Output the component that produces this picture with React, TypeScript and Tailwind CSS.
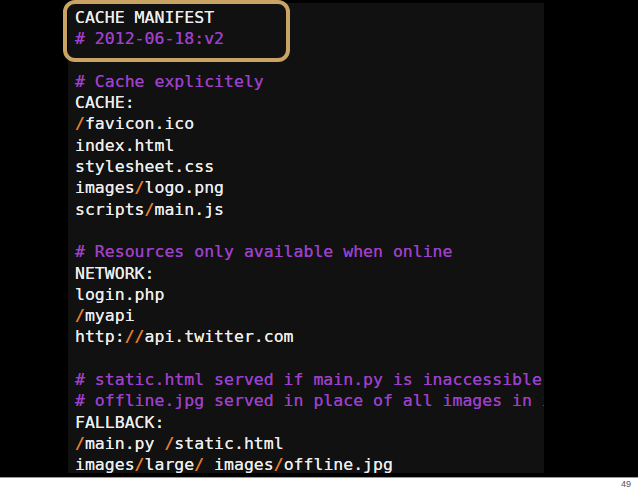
import React from "react";

type Seg = { t: string; c?: "w" | "p" | "o" };

const W = "text-[#ededed]";
const P = "text-[#9d3fcb]";
const O = "text-[#e27a2c]";

const lines: Seg[][] = [
  [{ t: "CACHE MANIFEST" }],
  [{ t: "# 2012-06-18:v2", c: "p" }],
  [],
  [{ t: "# Cache explicitely", c: "p" }],
  [{ t: "CACHE:" }],
  [{ t: "/", c: "o" }, { t: "favicon.ico" }],
  [{ t: "index.html" }],
  [{ t: "stylesheet.css" }],
  [{ t: "images" }, { t: "/", c: "o" }, { t: "logo.png" }],
  [{ t: "scripts" }, { t: "/", c: "o" }, { t: "main.js" }],
  [],
  [{ t: "# Resources only available when online", c: "p" }],
  [{ t: "NETWORK:" }],
  [{ t: "login.php" }],
  [{ t: "/", c: "o" }, { t: "myapi" }],
  [{ t: "http:" }, { t: "//", c: "o" }, { t: "api.twitter.com" }],
  [],
  [{ t: "# static.html served if main.py is inaccessible", c: "p" }],
  [{ t: "# offline.jpg served in place of all images in images/large/", c: "p" }],
  [{ t: "FALLBACK:" }],
  [{ t: "/", c: "o" }, { t: "main.py " }, { t: "/", c: "o" }, { t: "static.html" }],
  [
    { t: "images" },
    { t: "/", c: "o" },
    { t: "large" },
    { t: "/", c: "o" },
    { t: " images" },
    { t: "/", c: "o" },
    { t: "offline.jpg" },
  ],
];

function cls(c?: "w" | "p" | "o") {
  if (c === "p") return P;
  if (c === "o") return O;
  return W;
}

export default function App() {
  return (
    <div className="w-[638px] h-[491px] bg-white overflow-hidden flex flex-col">
      <div className="h-[479px] bg-black border-b border-[#9a9a9a] pl-[68px] pt-[3px]">
        <div className="relative w-[476px] h-[470px] bg-[#111111]">
          <div className="absolute inset-0 overflow-hidden">
            <div
              className="pl-[7px] pt-[4px] text-[16.5px] leading-[21.3px] whitespace-pre [text-shadow:0_0_0.4px_currentColor]"
              style={{ fontFamily: '"DejaVu Sans Mono", "Liberation Mono", monospace' }}
            >
              {lines.map((segs, i) => (
                <div key={i} className="h-[21.3px]">
                  {segs.map((s, j) => (
                    <span key={j} className={cls(s.c)}>
                      {s.t}
                    </span>
                  ))}
                </div>
              ))}
            </div>
          </div>
          <div className="absolute left-[-5px] top-[-3px] w-[227px] h-[62px] border-4 border-[#c9a464] rounded-[12px]" />
        </div>
      </div>
      <div
        className="flex-1 flex justify-end items-center pr-[7px] text-[9px] text-[#555]"
        style={{ fontFamily: '"Liberation Sans", Arial, sans-serif' }}
      >
        49
      </div>
    </div>
  );
}
